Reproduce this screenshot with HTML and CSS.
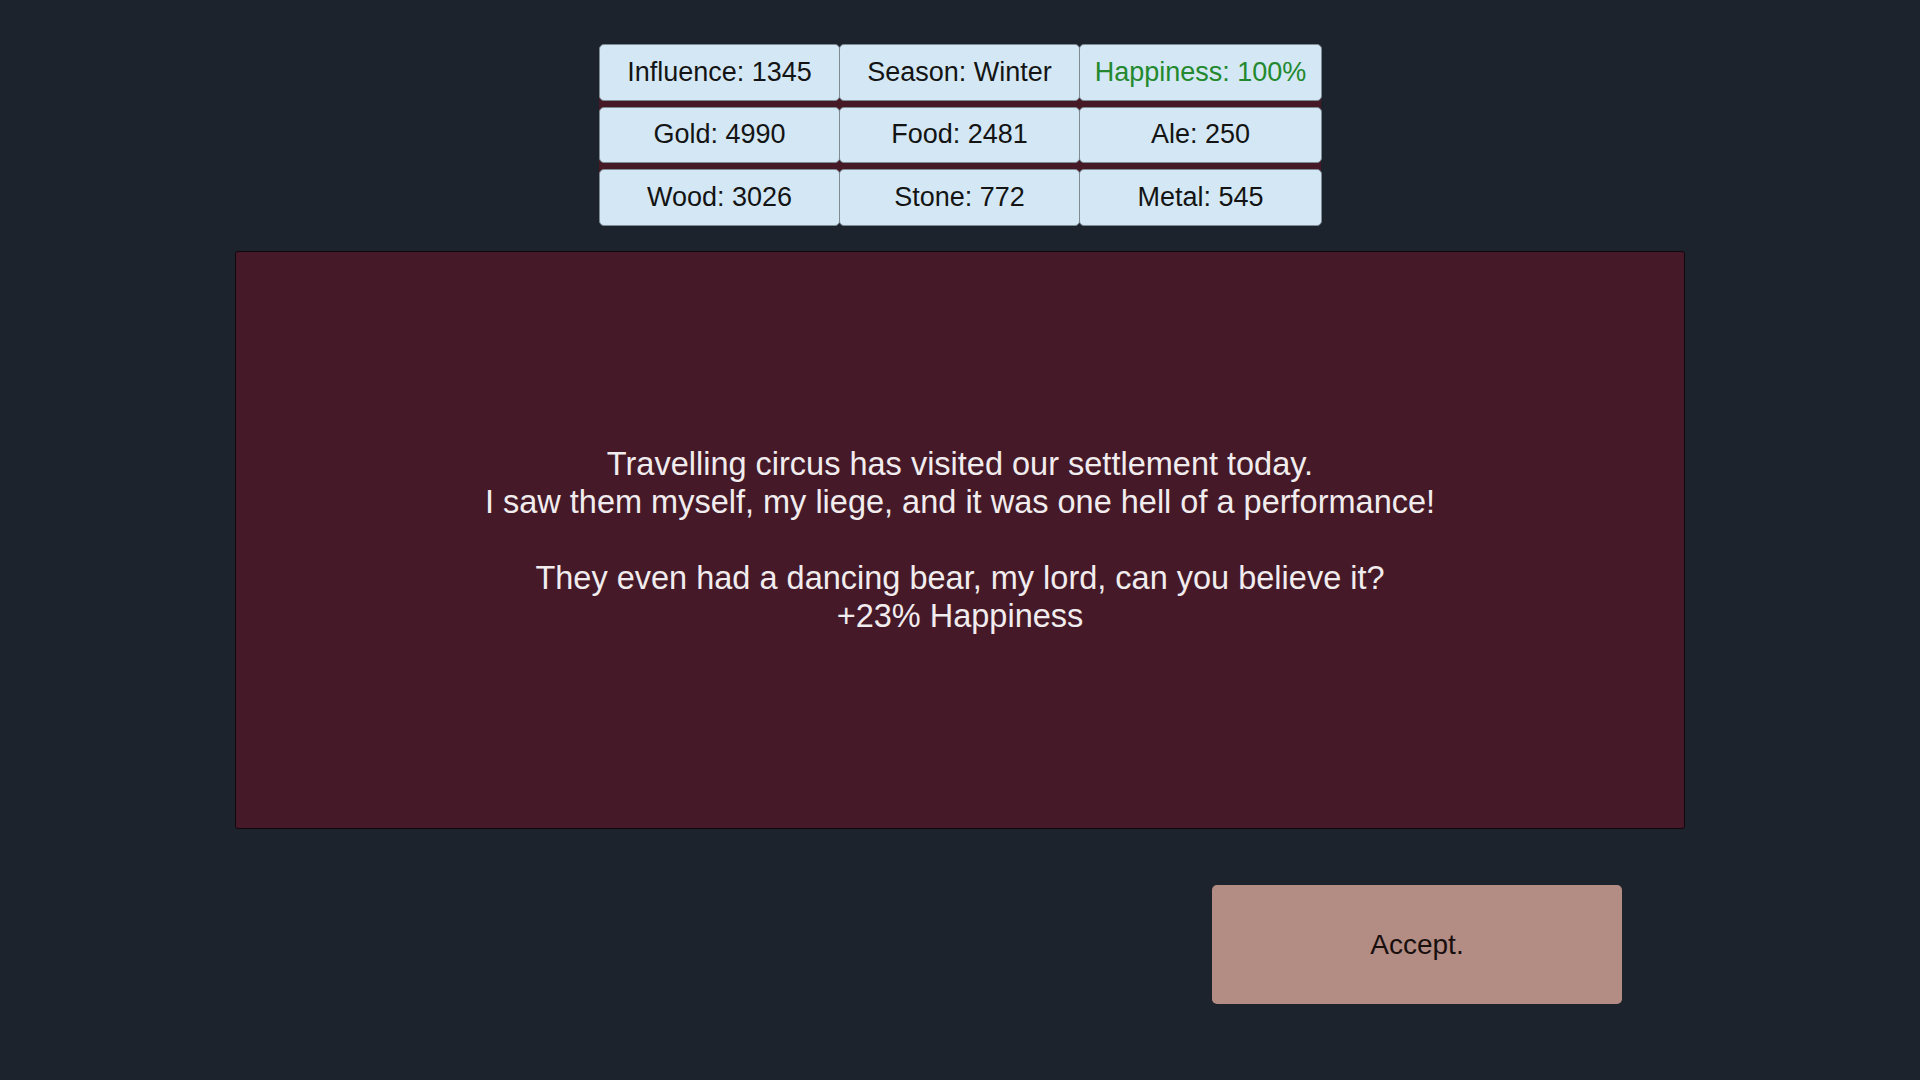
FILE: index.html
```html
<!DOCTYPE html>
<html lang="en">
<head>
  <meta charset="UTF-8">
  <meta name="viewport" content="width=device-width, initial-scale=1.0">
  <title>Settlement Event</title>
  <link rel="stylesheet" href="styles.css">
</head>
<body>
  <div class="screen">
    <div class="stats">
      <div class="stat">Influence: 1345</div>
      <div class="stat">Season: Winter</div>
      <div class="stat happy">Happiness: 100%</div>
      <div class="stat">Gold: 4990</div>
      <div class="stat">Food: 2481</div>
      <div class="stat">Ale: 250</div>
      <div class="stat">Wood: 3026</div>
      <div class="stat">Stone: 772</div>
      <div class="stat">Metal: 545</div>
    </div>

    <div class="eventPanel">
      <p class="eventText">Travelling circus has visited our settlement today.<br>I saw them myself, my liege, and it was one hell of a performance!<br><br>They even had a dancing bear, my lord, can you believe it?<br>+23% Happiness</p>
    </div>

    <div class="actions">
      <button class="acceptButton">Accept.</button>
    </div>
  </div>
</body>
</html>
```

FILE: styles.css
```css
body, html {
  height: 100%;
  margin: 0;
  background-color: #1d232d;
  font-family: 'Liberation Sans', Arial, sans-serif;
}
.screen {
  display: flex;
  flex-direction: column;
  align-items: center;
  padding-top: 44px;
}
.stats {
  display: grid;
  grid-template-columns: 240px 240px 242px;
  row-gap: 6px;
  /* maroon strip only shows between the rows */
  background: linear-gradient(#451a26, #451a26) center / 100% calc(100% - 56px) no-repeat;
}
.stat {
  height: 56.5px;
  box-sizing: border-box;
  display: flex;
  align-items: center;
  justify-content: center;
  background-color: #d3e8f4;
  border: 1px solid #7d8b95;
  border-radius: 5px;
  margin-right: -1px;
  font-size: 27px;
  color: #141414;
}
.stat.happy {
  color: #23882e;
}
.eventPanel {
  margin-top: 25.5px;
  width: 1450px;
  height: 578px;
  box-sizing: border-box;
  display: flex;
  align-items: center;
  justify-content: center;
  background-color: #451927;
  border: 1px solid #12080b;
  border-radius: 3px;
}
.eventText {
  margin: 0;
  text-align: center;
  font-size: 32.5px;
  line-height: 38px;
  color: #f1ecee;
}
.actions {
  width: 1450px;
  display: flex;
  justify-content: flex-end;
  padding-right: 63px;
  box-sizing: border-box;
  margin-top: 56px;
}
.acceptButton {
  width: 410px;
  height: 119px;
  border: none;
  border-radius: 5px;
  background-color: #b38d84;
  color: #1a0f0f;
  font-family: 'Liberation Sans', Arial, sans-serif;
  font-size: 28px;
  cursor: pointer;
}
```
